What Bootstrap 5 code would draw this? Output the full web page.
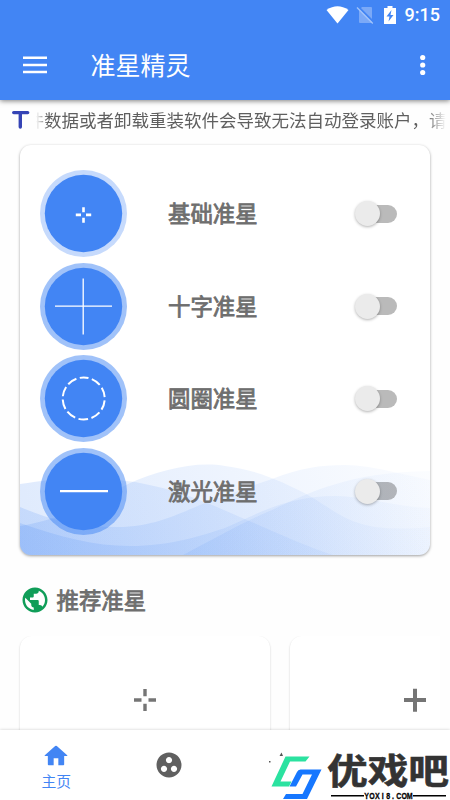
<!DOCTYPE html>
<html lang="zh-CN">
<head>
<meta charset="utf-8">
<meta name="viewport" content="width=device-width, initial-scale=1">
<title>准星精灵</title>
<link rel="stylesheet" href="https://cdn.jsdelivr.net/npm/bootstrap@5.3.0/dist/css/bootstrap.min.css">
<style>
body{width:450px;height:800px;overflow:hidden;background:#fefefe;font-family:"Noto Sans CJK SC",sans-serif;color:#6e6e6e}
svg{display:block;flex:none}
.app-head{height:100px;background:#4285f4;box-shadow:0 1px 5px rgba(0,0,0,.5);z-index:2}
.status{height:30px;padding-right:10px;font:500 18px/30px Roboto,sans-serif}
.sim{margin-left:7px}
.battery{margin-left:10px}
.clock{margin-left:9px;line-height:32px}
.toolbar{height:70px;padding:0 20px 0 20px}
.app-title{font-size:25px;line-height:36px;margin:-2px 0 0 40.5px}
.notice{height:40px;padding-left:12px}
.marquee{width:410px;margin-left:6px;font-size:17.5px;line-height:26px;color:#5f5f5f;overflow:hidden;-webkit-mask-image:linear-gradient(90deg,transparent,#000 12px,#000 390px,transparent);mask-image:linear-gradient(90deg,transparent,#000 12px,#000 390px,transparent)}
.marquee span{display:block;white-space:nowrap;margin-left:-9.500px}
.panel{margin:5px 20px 0;height:410px;border-radius:11px;box-shadow:0 1px 3px rgba(0,0,0,.38);background:#fff;padding-top:22.5px}
.waves{left:0;bottom:0;border-radius:0 0 11px 11px}
.aim-row{height:92.5px;padding:0 33px 0 20px}
.aim-name,.section-title{font-size:22.4px;-webkit-text-stroke:.8px currentColor;line-height:32px}
.aim-name{margin:-3px auto 0 41px}
.toggle{width:43px;height:18px;border-radius:9px;background:linear-gradient(90deg,transparent 8px,rgba(0,0,0,.27) 8px)}
.knob{width:25px;height:25px;border-radius:50%;background:#ebebeb;box-shadow:0 1px 3px rgba(0,0,0,.3);margin-left:1px}
.section-head{height:81px;padding:9px 20px 0 20px}
.section-title{margin:-3px 0 0 6.5px}
.rail{height:94px;width:440px;padding-left:20px;gap:20px;overflow:hidden}
.tile{width:250px;height:160px;flex:none;border-radius:12px;background:#fff;box-shadow:0 1px 2px rgba(0,0,0,.22);padding-top:52px}
.bottom-nav{height:70px;background:#fff;box-shadow:0 0 3px rgba(0,0,0,.2);z-index:2}
.tab{width:112.5px}
.tab-label{font-size:14.8px;line-height:22px;color:#4285f4}
.stamp{right:0;bottom:0;z-index:3}
</style>
</head>
<body class="d-flex flex-column">
<header class="app-head position-relative text-white">
  <div class="status d-flex justify-content-end align-items-center">
    <svg width="23" height="18" viewBox="0 0 23 18"><path fill="#fff" d="M.5 4Q11.5-3.500 22.500 4L11.500 17.500Z"/></svg>
    <svg class="sim" width="18" height="18" viewBox="0 0 18 18"><path fill="#fff" opacity=".3" d="M6 1h9q1 0 1 1v14q0 1-1 1H4q-1 0-1-1V4z"/><path stroke="#4285f4" stroke-width="2" d="M2 .5 18 16.500"/><path stroke="#a3c4fa" stroke-width="1.300" d="M1 1.500 16.800 17.500"/></svg>
    <svg class="battery" width="12" height="18" viewBox="0 0 12 18"><path fill="#fff" d="M3.500 0h5v2H12v16H0V2h3.500z"/><path fill="#4285f4" d="M7.500 4 2.500 10.500h3L4.500 15.500l5-6.500h-3z"/></svg>
    <span class="clock">9:15</span>
  </div>
  <div class="toolbar d-flex align-items-center">
    <svg width="30" height="30" viewBox="0 0 30 30"><path stroke="#fff" stroke-width="2.500" d="M3 7.700h24M3 15h24M3 22h24"/></svg>
    <span class="app-title me-auto">准星精灵</span>
    <svg width="16" height="24" viewBox="0 0 16 24" fill="#fff"><circle cx="8.700" cy="4.500" r="2.600"/><circle cx="8.700" cy="12" r="2.600"/><circle cx="8.700" cy="19.500" r="2.600"/></svg>
  </div>
</header>
<div class="notice d-flex align-items-center">
  <svg width="18" height="20" viewBox="0 0 18 20"><path fill="none" stroke="#3544b5" stroke-width="3.400" stroke-linecap="round" d="M1.700 2.600h14M8.300 2.600V17"/></svg>
  <div class="marquee"><span>件数据或者卸载重装软件会导致无法自动登录账户，请</span></div>
</div>
<main class="panel position-relative">
  <svg class="waves position-absolute" width="410" height="95" viewBox="20 460 410 95">
    <defs>
      <linearGradient id="w" gradientUnits="userSpaceOnUse" x1="20" y1="555" x2="430" y2="465"><stop offset="0" stop-color="#4285f4" stop-opacity=".17"/><stop offset=".5" stop-color="#4285f4" stop-opacity=".095"/><stop offset="1" stop-color="#4285f4" stop-opacity=".02"/></linearGradient>
    </defs>
    <g fill="url(#w)">
      <path d="M20 484C55 478 95 476 135 482C190 492 220 509 247 520C280 534 305 546 333 555H20Z"/>
      <path d="M20 526C70 518 100 497 128 484C160 470 195 461 225 466C258 470 285 483 308 495C335 511 345 522 375 527Q400 530 430 527V555H20Z"/>
      <path d="M20 507C50 520 80 527 117 527C155 527 180 513 200 505C225 496 250 486 272 479C300 468 320 465 345 465Q365 465 398 473L430 480V555H20Z"/>
      <path d="M20 523C60 537 95 546 130 546C170 546 200 536 225 528C260 512 290 496 335 496C365 496 395 507 430 508V555H20Z"/>
      <path d="M183 555C210 541 245 521 272 510C310 492 350 472 430 471V555Z"/>
    </g>
  </svg>
  <div class="aim-row position-relative d-flex align-items-center">
    <svg width="87" height="87" viewBox="0 0 87 87"><circle cx="43.500" cy="43.500" r="43.500" fill="#4285f4" opacity=".3"/><circle cx="43.500" cy="43.500" r="38.700" fill="#4285f4"/><path stroke="#fff" stroke-width="2.600" d="M43.500 37.200v5M43.500 47.700v5M35.800 44.900h5.200M46 44.900h5.200"/></svg>
    <span class="aim-name">基础准星</span>
    <div class="toggle d-flex align-items-center"><div class="knob"></div></div>
  </div>
  <div class="aim-row position-relative d-flex align-items-center">
    <svg width="87" height="87" viewBox="0 0 87 87"><circle cx="43.500" cy="43.500" r="43.500" fill="#4285f4" opacity=".5"/><circle cx="43.500" cy="43.500" r="38.700" fill="#4285f4"/><path stroke="#fff" stroke-width="1.300" d="M43.200 15.500v56M15 43.200h57"/></svg>
    <span class="aim-name">十字准星</span>
    <div class="toggle d-flex align-items-center"><div class="knob"></div></div>
  </div>
  <div class="aim-row position-relative d-flex align-items-center">
    <svg width="87" height="87" viewBox="0 0 87 87"><circle cx="43.500" cy="43.500" r="43.500" fill="#4285f4" opacity=".5"/><circle cx="43.500" cy="43.500" r="38.700" fill="#4285f4"/><circle cx="43.700" cy="43.500" r="21" fill="none" stroke="#fff" stroke-width="2" stroke-dasharray="9.800 3.395" stroke-dashoffset="4.900" transform="rotate(-90 43.700 43.500)"/></svg>
    <span class="aim-name">圆圈准星</span>
    <div class="toggle d-flex align-items-center"><div class="knob"></div></div>
  </div>
  <div class="aim-row position-relative d-flex align-items-center">
    <svg width="87" height="87" viewBox="0 0 87 87"><circle cx="43.500" cy="43.500" r="43.500" fill="#4285f4" opacity=".5"/><circle cx="43.500" cy="43.500" r="38.700" fill="#4285f4"/><path stroke="#fff" stroke-width="2.300" d="M20 43.200h48"/></svg>
    <span class="aim-name">激光准星</span>
    <div class="toggle d-flex align-items-center"><div class="knob"></div></div>
  </div>
</main>
<div class="section-head d-flex align-items-center">
  <svg width="30" height="30" viewBox="0 0 24 24" fill="#109d58"><path d="M12 2C6.480 2 2 6.480 2 12s4.480 10 10 10 10-4.480 10-10S17.520 2 12 2zm-1 17.930c-3.950-.49-7-3.850-7-7.930 0-.62.080-1.210.21-1.790L9 15v1c0 1.100.9 2 2 2v1.930zm6.900-2.540c-.26-.81-1-1.390-1.900-1.390h-1v-3c0-.55-.45-1-1-1H8v-2h2c.55 0 1-.45 1-1V7h2c1.100 0 2-.9 2-2v-.41c2.930 1.190 5 4.060 5 7.410 0 2.080-.8 3.970-2.100 5.390z"/></svg>
  <span class="section-title">推荐准星</span>
</div>
<div class="rail d-flex">
  <div class="tile d-flex justify-content-center"><svg width="24" height="24" viewBox="0 0 24 24"><path stroke="#757575" stroke-width="3.400" d="M12 1v7.300M12 15.700V23M1 12h7.500M15.500 12H23"/></svg></div>
  <div class="tile d-flex justify-content-center"><svg width="24" height="24" viewBox="0 0 24 24"><path stroke="#757575" stroke-width="4" d="M12 .8v23M1 12h22"/></svg></div>
</div>
<nav class="bottom-nav position-relative d-flex">
  <div class="tab d-flex flex-column align-items-center pt-2">
    <svg width="28" height="28" viewBox="0 0 24 24" fill="#4285f4" class="mt-1"><path d="M10 20v-6h4v6h4.300q.7 0 .7-.7V12h2.300q.7 0 .3-.6L12.700 3.500q-.7-.6-1.400 0L2.400 11.400q-.4.600.3.600H5v7.300q0 .7.700.7z"/></svg>
    <span class="tab-label">主页</span>
  </div>
  <div class="tab d-flex justify-content-center align-items-center">
    <svg width="30" height="30" viewBox="0 0 24 24" fill="#606060"><path d="M12 2C6.480 2 2 6.480 2 12s4.480 10 10 10 10-4.480 10-10S17.520 2 12 2zM8 17.500c-1.380 0-2.500-1.120-2.500-2.500s1.120-2.500 2.500-2.500 2.500 1.120 2.500 2.500-1.120 2.500-2.500 2.500zM9.500 8c0-1.380 1.120-2.500 2.500-2.500s2.500 1.120 2.500 2.500-1.120 2.500-2.500 2.500S9.500 9.380 9.500 8zm6.500 9.500c-1.380 0-2.500-1.120-2.500-2.500s1.120-2.500 2.500-2.500 2.500 1.120 2.500 2.500-1.120 2.500-2.500 2.500z"/></svg>
  </div>
</nav>
<svg class="stamp position-absolute" width="185" height="50" viewBox="265 750 185 50">
  <path fill="#555" d="M279.500 756 281.500 752.500 283 756zM269 761h1.500v1.500H269zM391 756q4-2.500 7 0z"/>
  <path fill="#2be2a0" d="M285.500 756.500H309.500L305.500 761.500H290L280.500 781.500H291.500L289 786.500H271.500Z"/>
  <path fill="#1677ff" d="M300.500 769.500H321.500L307 799H283L286 794H302.500L312 774.500H302.500L296 786.500H289.500L297 772Q298 769.500 300.500 769.500Z"/>
  <text x="327" y="784" textLength="122" lengthAdjust="spacingAndGlyphs" font-family="Noto Sans CJK SC, sans-serif" font-size="35.500" font-weight="700" fill="#333" stroke="#333" stroke-width=".6">优戏吧</text>
  <path stroke="#000" stroke-width="1.600" d="M331 795.700h33M413 795.700h33"/>
  <text transform="translate(364 799) scale(.72 1)" x="3.700 11.200 18.700 26.100 33.500 40.200 48.500 56 63.400" y="0" text-anchor="middle" font-family="Liberation Sans, sans-serif" font-size="9.800" font-weight="700" fill="#000" stroke="#000" stroke-width=".3">YOXI8.COM</text>
</svg>
<script src="https://cdn.jsdelivr.net/npm/bootstrap@5.3.0/dist/js/bootstrap.bundle.min.js"></script>
</body>
</html>
